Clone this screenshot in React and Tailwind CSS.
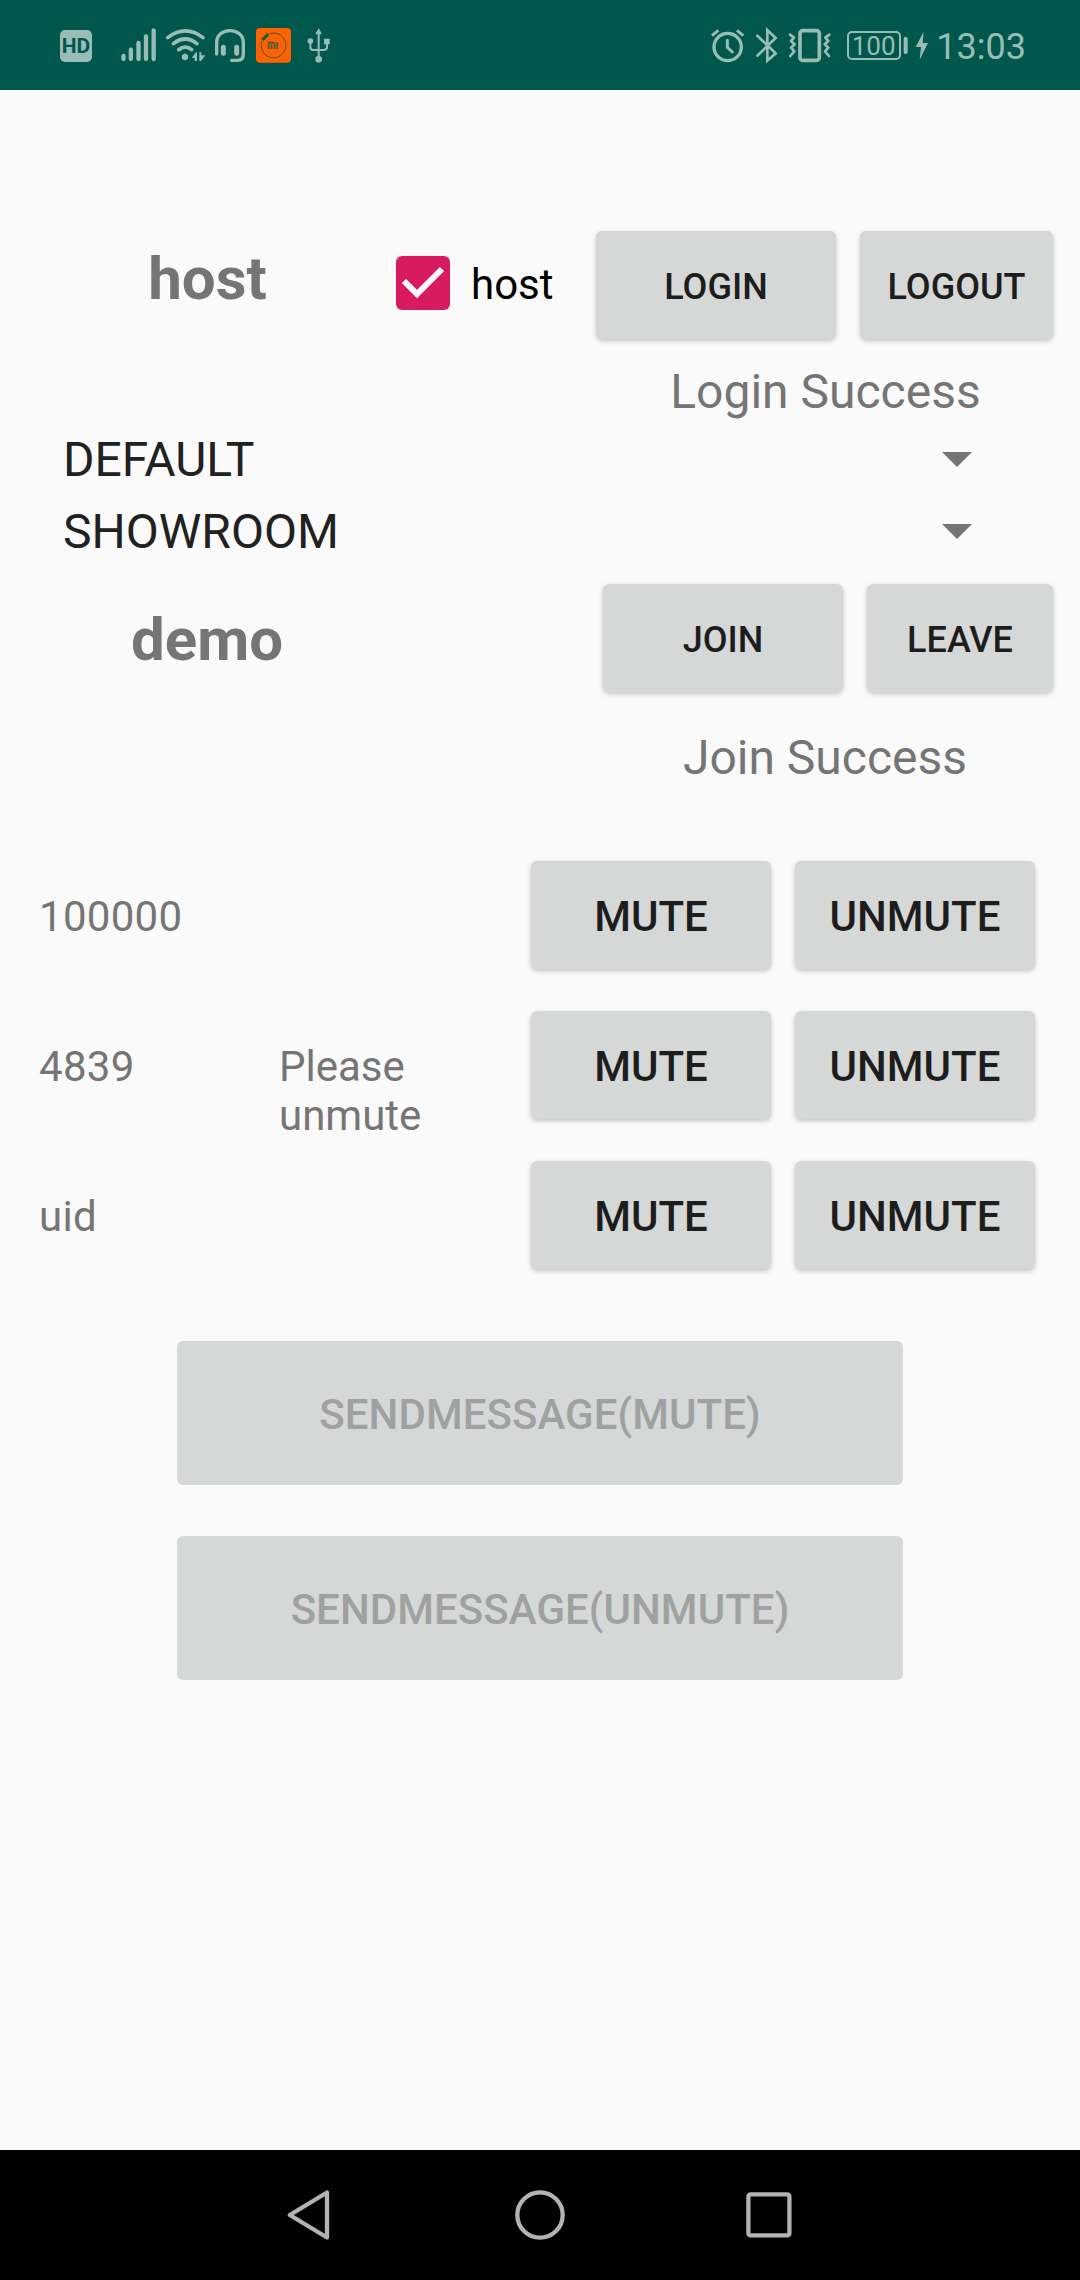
const INK = "#99bcb7";

function Glyph({ x, w, children }) {
  return (
    <svg width={w / 3} height="80" viewBox={`${x} 0 ${w} 240`} fill="none" stroke={INK} strokeLinecap="round" strokeLinejoin="round" className="shrink-0">
      {children}
    </svg>
  );
}

function StatusBar() {
  return (
    <header className="flex h-[90px] items-end bg-[#00574b] pl-[60px] text-[#99bcb7]">
      <div className="mb-[28px] mr-[28px] flex h-[32px] w-[32px] items-center justify-center rounded-[5px] bg-[#99bcb7] text-[21px] font-bold leading-none text-[#00574b]">
        HD
      </div>
      <Glyph x={240} w={120}>
        <path strokeWidth="13" d="M250.500 138V147M272.500 119V147M295.500 99V147M318 79V147M341 61V147" />
      </Glyph>
      <Glyph x={360} w={150}>
        <path strokeWidth="11" d="M383 83Q436 42 489 83M400 101Q436 73 471 101M416 119Q436 104 455 119" />
        <circle cx="435" cy="141" r="9.500" fill={INK} stroke="none" />
        <path fill={INK} stroke="none" d="M455 144L468 127H471V153H464V144ZM478 127H484V136H496L483 153H478Z" />
      </Glyph>
      <Glyph x={510} w={120}>
        <path strokeWidth="10" d="M530 132V98C530 75 548 62 570 62S610 75 610 98V132Q610 151 593 151H575" />
        <path strokeWidth="15" d="M550 112V130M590 112V130" />
      </Glyph>
      <Glyph x={630} w={150}>
        <rect x="648" y="54" width="105" height="104" rx="12" fill="#ff6200" stroke="none" />
        <path stroke="#3f5a3c" strokeWidth="3" strokeLinecap="butt" d="M690 71A37 37 0 1 1 666 94" />
        <path stroke="#12573f" strokeWidth="9" strokeLinecap="butt" d="M667 90L685 72" />
        <path stroke="#3f5a3c" strokeWidth="5" strokeLinecap="butt" d="M686 117V98H700Q704 98 704 103V117M695 103V117M712 96V117" />
      </Glyph>
      <Glyph x={780} w={120}>
        <path strokeWidth="6" d="M836 66V146M811 98V112Q811 120 820 120H851Q861 120 861 112V98" />
        <path fill={INK} stroke="none" d="M836 54L846 73H826ZM852 86H869V103H852Z" />
        <circle cx="811" cy="93" r="8.500" fill={INK} stroke="none" />
        <circle cx="836" cy="148" r="10" fill={INK} stroke="none" />
      </Glyph>

      <div className="ml-[370px] flex items-end">
        <Glyph x={60} w={120}>
          <circle cx="113" cy="111" r="41" strokeWidth="10" />
          <path strokeWidth="9" strokeLinecap="butt" d="M66 77L85 61M160 77L141 61" />
          <path strokeWidth="9" d="M112 91V112L127 126" />
        </Glyph>
        <Glyph x={180} w={100}>
          <path strokeWidth="8" strokeLinejoin="miter" d="M202 77L257 130L232 152V60L257 84L202 137" />
        </Glyph>
        <Glyph x={280} w={160}>
          <rect x="331" y="62" width="58" height="89" rx="8" strokeWidth="11" />
          <path strokeWidth="8" d="M301 74L313 83L304 93L315 103L304 113L314 124L302 138M419 74L407 83L416 93L405 103L416 113L406 124L418 138" />
        </Glyph>
        <div className="mb-[30px] ml-[10px] mr-[2px] flex h-[29px] w-[54px] items-center justify-center rounded-[5px] border-2 border-[#99bcb7] text-[26px] leading-none">
          <span>100</span>
        </div>
        <Glyph x={638} w={92}>
          <path strokeWidth="12" d="M646 86V126" />
          <path fill={INK} stroke="none" d="M700 65L676 111H692L688 149L713 99H697Z" />
        </Glyph>
        <div className="mb-[22px] ml-[3px] text-[36px] leading-[42px]">13:03</div>
      </div>
    </header>
  );
}

function Button({ className, children }) {
  return (
    <button
      type="button"
      className={`flex h-[108px] items-center justify-center rounded-[6px] bg-[#d6d8d7] font-medium text-[#1d1d1d] shadow-[0_2px_5px_rgba(0,0,0,0.22)] ${className}`}
    >
      {children}
    </button>
  );
}

function Spinner({ label }) {
  return (
    <div className="flex h-[72px] items-center justify-between pb-px pl-[63px] pr-[108px] text-[48px] leading-[57px] text-[#212121]">
      <span>{label}</span>
      <svg width="30" height="15" viewBox="0 0 30 15" className="shrink-0">
        <path d="M0 0H30L15 15Z" fill="#757575" />
      </svg>
    </div>
  );
}

function UserRow({ uid, message }) {
  return (
    <div className="flex h-[109px] pl-[39px]">
      <span className="mt-[31px] w-[240px] leading-[49px] tracking-[0.3px]">{uid}</span>
      <span className="mt-[31px] w-[252px] pr-[60px] leading-[49px]">{message}</span>
      <Button className="w-[240px] pt-[3px] text-[42px]">MUTE</Button>
      <Button className="ml-[24px] w-[240px] pt-[3px] text-[42px]">UNMUTE</Button>
    </div>
  );
}

function SendButton({ children }) {
  return (
    <button type="button" disabled className="flex h-[144px] w-[726px] items-center justify-center rounded-[6px] bg-[#d6d8d7] pt-[3px] text-[42px] font-medium tracking-[0.06px] text-[#a0a1a1]">
      {children}
    </button>
  );
}

function NavBar() {
  return (
    <nav className="flex h-[130px] items-center bg-black pl-[286px]">
      <svg width="46" height="52" viewBox="0 0 46 52" fill="none" stroke="#b3b3b3" strokeWidth="4.300" strokeLinejoin="round">
        <path d="M41 3.500V48.500L3.800 26Z" />
      </svg>
      <svg width="52" height="52" viewBox="0 0 52 52" fill="none" stroke="#b3b3b3" strokeWidth="4.300" className="ml-[182px]">
        <circle cx="26" cy="26" r="22.700" />
      </svg>
      <svg width="46" height="46" viewBox="0 0 46 46" fill="none" stroke="#b3b3b3" strokeWidth="4.300" className="ml-[180px]">
        <rect x="2.400" y="2.400" width="41" height="41" rx="2" />
      </svg>
    </nav>
  );
}

export default function App() {
  return (
    <div className="flex h-[2280px] w-[1080px] flex-col overflow-hidden bg-[#fafafa] font-['Roboto',sans-serif] text-[#757575]">
      <StatusBar />
      <main className="flex flex-1 flex-col pt-[141px]">
        <section className="flex h-[108px]">
          <h2 className="mt-[12px] w-[396px] pl-[19px] text-center text-[60px] font-bold leading-[71px]">host</h2>
          <label className="flex h-[108px] w-[200px] items-center text-[42px] text-black">
            <svg width="54" height="54" viewBox="0 0 54 54" className="mt-[-4px] shrink-0">
              <rect width="54" height="54" rx="6" fill="#d81b60" />
              <path d="M8 25L21 38L46 13" fill="none" stroke="#fafafa" strokeWidth="6" />
            </svg>
            <span className="-mt-px ml-[21px]">host</span>
          </label>
          <Button className="w-[240px] pt-[4px] text-[36px]">LOGIN</Button>
          <Button className="ml-[24px] w-[193px] pt-[4px] text-[36px]">LOGOUT</Button>
        </section>
        <div className="ml-[571px] mt-[24px] w-[509px] text-center text-[48px] leading-[57px]">Login Success</div>
        <div className="mt-[4px]">
          <Spinner label="DEFAULT" />
          <Spinner label="SHOWROOM" />
        </div>
        <section className="mt-[16px] flex h-[109px]">
          <h2 className="mt-[20px] w-[414px] text-center text-[60px] font-bold leading-[71px]">demo</h2>
          <Button className="ml-[189px] w-[240px] pt-[4px] text-[36px]">JOIN</Button>
          <Button className="ml-[24px] w-[186px] pt-[4px] text-[36px]">LEAVE</Button>
        </section>
        <div className="ml-[571px] mt-[36px] w-[508px] text-center text-[48px] leading-[57px]">Join Success</div>
        <section className="mt-[75px] flex flex-col gap-[41px] text-[42px]">
          <UserRow uid="100000" />
          <UserRow uid="4839" message="Please unmute" />
          <UserRow uid="uid" />
        </section>
        <section className="mt-[71px] flex flex-col items-center gap-[51px]">
          <SendButton>SENDMESSAGE(MUTE)</SendButton>
          <SendButton>SENDMESSAGE(UNMUTE)</SendButton>
        </section>
      </main>
      <NavBar />
    </div>
  );
}
